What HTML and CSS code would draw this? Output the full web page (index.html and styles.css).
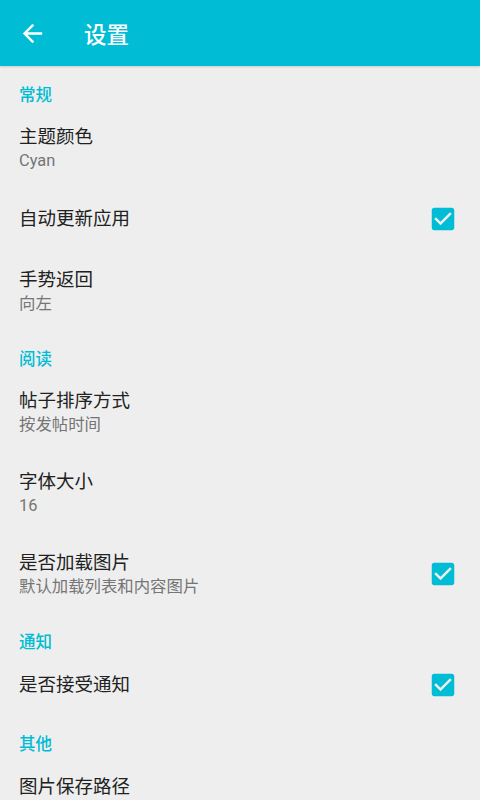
FILE: index.html
```html
<!DOCTYPE html>
<html lang="zh-CN">
<head>
  <meta charset="UTF-8" />
  <meta name="viewport" content="width=device-width, initial-scale=1.0"/>
  <title>设置</title>
  <link rel="stylesheet" href="styles.css">
</head>
<body>
  <header class="toolbar">
    <svg class="back" viewBox="0 0 24 24"><path d="M20 11H7.83l5.59-5.59L12 4l-8 8 8 8 1.41-1.41L7.83 13H20v-2z"/></svg>
    <h1>设置</h1>
  </header>

  <div class="prefs">
    <div class="category">常规</div>
    <div class="item">
      <div class="text">
        <div class="title">主题颜色</div>
        <div class="summary">Cyan</div>
      </div>
    </div>
    <div class="item single">
      <div class="text">
        <div class="title">自动更新应用</div>
      </div>
      <svg class="check" viewBox="0 0 24 24"><path d="M19 3H5c-1.11 0-2 .9-2 2v14c0 1.1.89 2 2 2h14c1.11 0 2-.9 2-2V5c0-1.1-.89-2-2-2zm-9 14l-5-5 1.41-1.41L10 14.17l7.59-7.59L19 8l-9 9z"/></svg>
    </div>
    <div class="item">
      <div class="text">
        <div class="title">手势返回</div>
        <div class="summary">向左</div>
      </div>
    </div>

    <div class="category">阅读</div>
    <div class="item">
      <div class="text">
        <div class="title">帖子排序方式</div>
        <div class="summary">按发帖时间</div>
      </div>
    </div>
    <div class="item">
      <div class="text">
        <div class="title">字体大小</div>
        <div class="summary">16</div>
      </div>
    </div>
    <div class="item">
      <div class="text">
        <div class="title">是否加载图片</div>
        <div class="summary">默认加载列表和内容图片</div>
      </div>
      <svg class="check" viewBox="0 0 24 24"><path d="M19 3H5c-1.11 0-2 .9-2 2v14c0 1.1.89 2 2 2h14c1.11 0 2-.9 2-2V5c0-1.1-.89-2-2-2zm-9 14l-5-5 1.41-1.41L10 14.17l7.59-7.59L19 8l-9 9z"/></svg>
    </div>

    <div class="category">通知</div>
    <div class="item single">
      <div class="text">
        <div class="title">是否接受通知</div>
      </div>
      <svg class="check" viewBox="0 0 24 24"><path d="M19 3H5c-1.11 0-2 .9-2 2v14c0 1.1.89 2 2 2h14c1.11 0 2-.9 2-2V5c0-1.1-.89-2-2-2zm-9 14l-5-5 1.41-1.41L10 14.17l7.59-7.59L19 8l-9 9z"/></svg>
    </div>

    <div class="category">其他</div>
    <div class="item single">
      <div class="text">
        <div class="title">图片保存路径</div>
      </div>
    </div>
  </div>
</body>
</html>
```

FILE: styles.css
```css
body {
  margin: 0;
  background: #eeeeee;
  font-family: Roboto, "Noto Sans CJK SC", sans-serif;
  overflow: hidden;
}

.toolbar {
  height: 66px;
  background: #00bcd4;
  display: flex;
  align-items: center;
  box-shadow: 0 1px 2px rgba(0, 0, 0, 0.15);
  position: relative;
}

.back {
  width: 29px;
  height: 29px;
  fill: #fff;
  margin-left: 18px;
}

.toolbar h1 {
  margin: 3px 0 0 37px;
  color: #fff;
  font-size: 22.5px;
  font-weight: 500;
  line-height: 24px;
}

.category {
  height: 40px;
  box-sizing: border-box;
  padding: 21px 0 0 19px;
  line-height: 18px;
  font-size: 16.5px;
  font-weight: 500;
  color: #00bcd4;
}

.item {
  display: flex;
  align-items: center;
  height: 81px;
  box-sizing: border-box;
  padding: 19px 22px 16px 19px;
}

.item.single {
  height: 62px;
  padding-top: 20px;
  padding-bottom: 18px;
}

.text {
  flex: 1;
}

.title {
  font-size: 18.5px;
  line-height: 24px;
  color: #212121;
}

.summary {
  font-size: 16.4px;
  line-height: 23px;
  color: #757575;
}

.check {
  width: 30px;
  height: 30px;
  fill: #00bcd4;
}
```
